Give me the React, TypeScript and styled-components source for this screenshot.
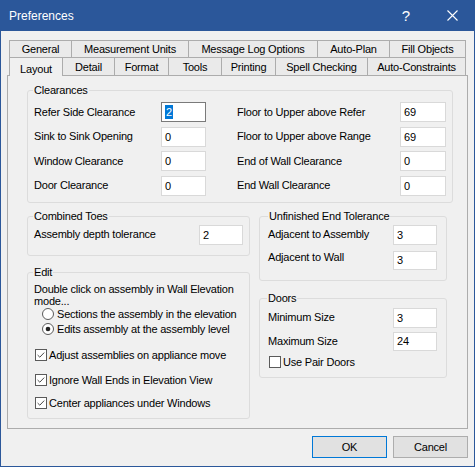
import React from 'react';
import styled, { createGlobalStyle } from 'styled-components';

const GlobalStyle = createGlobalStyle`
  html, body { margin: 0; padding: 0; background: #f0f0f0; }
  body { font-family: "Liberation Sans", Arial, sans-serif; font-size: 11px; color: #000; }
  * { box-sizing: border-box; }
`;

const Window = styled.div`
  width: 475px;
  height: 467px;
  display: flex;
  flex-direction: column;
  border: 1px solid #2b579a;
  border-top: none;
  background: #f0f0f0;
  letter-spacing: -0.2px;
`;

const TitleBar = styled.div`
  height: 31px;
  flex: none;
  display: flex;
  align-items: center;
  background: #2b579a;
  color: #fff;
  font-size: 12px;
  padding-left: 9px;
  margin: 0 -1px;
  letter-spacing: 0;
`;

const Title = styled.div`
  flex: 1;
`;

const CaptionButton = styled.div`
  width: 46px;
  height: 31px;
  display: flex;
  align-items: center;
  justify-content: center;
  font-size: 15px;
  color: #fff;
`;

const Body = styled.div`
  flex: 1;
  display: flex;
  flex-direction: column;
  padding: 9px 6px 0 6px;
`;

const TabRow = styled.div<{ $h: number }>`
  display: flex;
  height: ${p => p.$h}px;
  padding-left: 2px;
  align-items: flex-start;
`;

const Tab = styled.div<{ $w: number; $h: number; $selected?: boolean }>`
  width: ${p => p.$w}px;
  height: ${p => (p.$selected ? p.$h + 1 : p.$h)}px;
  display: flex;
  align-items: center;
  justify-content: center;
  border-top: 1px solid #acacac;
  border-right: 1px solid #acacac;
  background: ${p => (p.$selected ? '#f0f0f0' : '#eaeaea')};
  position: relative;
  z-index: ${p => (p.$selected ? 2 : 0)};
  padding-top: ${p => (p.$selected ? 3 : 0)}px;
  white-space: nowrap;
  &:first-child { border-left: 1px solid #acacac; }
`;

const Panel = styled.div`
  flex: 1;
  border: 1px solid #acacac;
  background: #f0f0f0;
  padding: 14px 14px 0 19px;
  display: flex;
  flex-direction: column;
`;

const Group = styled.div<{ $pad: string }>`
  position: relative;
  border: 1px solid #dcdcdc;
  border-radius: 3px;
  padding: ${p => p.$pad};
`;

const Legend = styled.span<{ $left: number }>`
  position: absolute;
  top: -7px;
  left: ${p => p.$left}px;
  padding: 0 1px;
  line-height: 13px;
  background: #f0f0f0;
`;

const ClearGrid = styled.div`
  display: grid;
  grid-template-columns: 127px 76px 163px 46px;
  grid-auto-rows: 20px;
  row-gap: 4.5px;
  align-items: center;
`;

const Label = styled.span`
  line-height: 13px;
  white-space: nowrap;
`;

const TextBox = styled.div<{ $w: number; $h?: number; $focused?: boolean }>`
  width: ${p => p.$w}px;
  height: ${p => p.$h ?? 20}px;
  background: #fff;
  border: 1px solid ${p => (p.$focused ? '#7a7a7a' : '#d9d9d9')};
  display: flex;
  align-items: center;
  padding-left: 3px;
  flex: none;
`;

const Selected = styled.span`
  background: #0078d7;
  color: #fff;
  line-height: 14px;
  padding: 0 1px;
`;

const Lower = styled.div`
  display: flex;
  gap: 9px;
  margin-top: 13px;
`;

const Column = styled.div<{ $w: number; $gap: number }>`
  width: ${p => p.$w}px;
  display: flex;
  flex-direction: column;
  gap: ${p => p.$gap}px;
`;

const FieldRow = styled.div<{ $top?: boolean; $mt?: number }>`
  display: flex;
  justify-content: space-between;
  align-items: ${p => (p.$top ? 'flex-start' : 'center')};
  margin-top: ${p => p.$mt ?? 0}px;
`;

const Desc = styled.div`
  line-height: 12px;
`;

const OptionRow = styled.div<{ $mt?: number; $indent?: number; $h?: number }>`
  display: flex;
  align-items: center;
  height: ${p => p.$h ?? 15}px;
  margin-top: ${p => p.$mt ?? 0}px;
  padding-left: ${p => p.$indent ?? 0}px;
  gap: ${p => (p.$indent && p.$indent > 3 ? 3 : 2)}px;
  white-space: nowrap;
`;

const Footer = styled.div`
  display: flex;
  justify-content: flex-end;
  gap: 6px;
  padding: 7px 0 8px;
`;

const Button = styled.div<{ $default?: boolean }>`
  width: 75px;
  height: 22px;
  display: flex;
  align-items: center;
  justify-content: center;
  background: #e1e1e1;
  border: 1px solid ${p => (p.$default ? '#0078d7' : '#adadad')};
`;

const CheckBox = ({ checked }: { checked: boolean }) => (
  <svg width="12" height="12" viewBox="0 0 12 12">
    <rect x="0.5" y="0.5" width="11" height="11" fill="#fff" stroke="#5a5a5a" />
    {checked && <path d="M2.6 6 L4.8 8.2 L9.2 3.6" fill="none" stroke="#4a4a4a" strokeWidth="1" />}
  </svg>
);

const Radio = ({ checked }: { checked: boolean }) => (
  <svg width="12" height="12" viewBox="0 0 12 12">
    <circle cx="6" cy="6" r="5.5" fill="#fff" stroke="#5a5a5a" />
    {checked && <circle cx="6" cy="6" r="2.3" fill="#222" />}
  </svg>
);

const row1 = [
  ['General', 63],
  ['Measurement Units', 117],
  ['Message Log Options', 129],
  ['Auto-Plan', 72],
  ['Fill Objects', 76],
] as const;

const row2 = [
  ['Layout', 54],
  ['Detail', 52],
  ['Format', 54],
  ['Tools', 53],
  ['Printing', 54],
  ['Spell Checking', 92],
  ['Auto-Constraints', 98],
] as const;

const clearances: [string, string, string, string][] = [
  ['Refer Side Clearance', '2', 'Floor to Upper above Refer', '69'],
  ['Sink to Sink Opening', '0', 'Floor to Upper above Range', '69'],
  ['Window Clearance', '0', 'End of Wall Clearance', '0'],
  ['Door Clearance', '0', 'End Wall Clearance', '0'],
];

export default function App() {
  return (
    <>
      <GlobalStyle />
      <Window>
        <TitleBar>
          <Title>Preferences</Title>
          <CaptionButton>?</CaptionButton>
          <CaptionButton>
            <svg width="11" height="11" viewBox="0 0 11 11">
              <path d="M0.5 0.5 L10.5 10.5 M10.5 0.5 L0.5 10.5" stroke="#fff" strokeWidth="1.1" />
            </svg>
          </CaptionButton>
        </TitleBar>
        <Body>
          <TabRow $h={17}>
            {row1.map(([t, w]) => (
              <Tab key={t} $w={w} $h={17}>{t}</Tab>
            ))}
          </TabRow>
          <TabRow $h={18}>
            {row2.map(([t, w], i) => (
              <Tab key={t} $w={w} $h={18} $selected={i === 0}>{t}</Tab>
            ))}
          </TabRow>
          <Panel>
            <Group $pad="11px 6px 6px 6px">
              <Legend $left={5}>Clearances</Legend>
              <ClearGrid>
                {clearances.map(([a, av, b, bv], i) => (
                  <React.Fragment key={a}>
                    <Label>{a}</Label>
                    <TextBox $w={45} $focused={i === 0}>
                      {i === 0 ? <Selected>{av}</Selected> : av}
                    </TextBox>
                    <Label>{b}</Label>
                    <TextBox $w={46}>{bv}</TextBox>
                  </React.Fragment>
                ))}
              </ClearGrid>
            </Group>
            <Lower>
              <Column $w={223} $gap={16}>
                <Group $pad="8px 6px 10px 6px">
                  <Legend $left={5}>Combined Toes</Legend>
                  <FieldRow>
                    <Label>Assembly depth tolerance</Label>
                    <TextBox $w={44}>2</TextBox>
                  </FieldRow>
                </Group>
                <Group $pad="10px 6px 7px 6px">
                  <Legend $left={5}>Edit</Legend>
                  <Desc>Double click on assembly in Wall Elevation</Desc>
                  <Desc>mode...</Desc>
                  <OptionRow $indent={8}>
                    <Radio checked={false} />
                    <span>Sections the assembly in the elevation</span>
                  </OptionRow>
                  <OptionRow $indent={8}>
                    <Radio checked />
                    <span>Edits assembly at the assembly level</span>
                  </OptionRow>
                  <OptionRow $indent={1} $mt={11}>
                    <CheckBox checked />
                    <span>Adjust assemblies on appliance move</span>
                  </OptionRow>
                  <OptionRow $indent={1} $mt={10}>
                    <CheckBox checked />
                    <span>Ignore Wall Ends in Elevation View</span>
                  </OptionRow>
                  <OptionRow $indent={1} $mt={8}>
                    <CheckBox checked />
                    <span>Center appliances under Windows</span>
                  </OptionRow>
                </Group>
              </Column>
              <Column $w={188} $gap={17}>
                <Group $pad="8px 9px 10px 8px">
                  <Legend $left={8}>Unfinished End Tolerance</Legend>
                  <FieldRow>
                    <Label>Adjacent to Assembly</Label>
                    <TextBox $w={44}>3</TextBox>
                  </FieldRow>
                  <FieldRow $top $mt={6}>
                    <Label>Adjacent to Wall</Label>
                    <TextBox $w={44} $h={19}>3</TextBox>
                  </FieldRow>
                </Group>
                <Group $pad="9px 9px 8px 8px">
                  <Legend $left={7}>Doors</Legend>
                  <FieldRow>
                    <Label>Minimum Size</Label>
                    <TextBox $w={44}>3</TextBox>
                  </FieldRow>
                  <FieldRow $mt={4}>
                    <Label>Maximum Size</Label>
                    <TextBox $w={44} $h={19}>24</TextBox>
                  </FieldRow>
                  <OptionRow $indent={1} $mt={5} $h={13}>
                    <CheckBox checked={false} />
                    <span>Use Pair Doors</span>
                  </OptionRow>
                </Group>
              </Column>
            </Lower>
          </Panel>
          <Footer>
            <Button $default>OK</Button>
            <Button>Cancel</Button>
          </Footer>
        </Body>
      </Window>
    </>
  );
}
